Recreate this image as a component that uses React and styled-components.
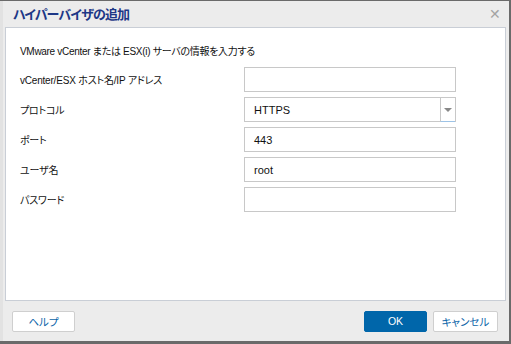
import React from 'react';
import styled, { createGlobalStyle } from 'styled-components';

const Global = createGlobalStyle`
  html, body {
    margin: 0;
    padding: 0;
    background: #6a6a6a;
  }
  body {
    font-family: "Liberation Sans", "Noto Sans CJK JP", sans-serif;
    font-feature-settings: "palt";
  }
`;

const Frame = styled.div`
  width: 511px;
  height: 344px;
  box-sizing: border-box;
  padding: 1px 2px 3px 0;
  background: #6a6a6a;
`;

const Dialog = styled.div`
  height: 100%;
  display: flex;
  flex-direction: column;
  background: #ececec;
  border-left: 3px solid #e2e2e2;
  box-sizing: border-box;
`;

const TitleBar = styled.div`
  height: 26px;
  flex: none;
  display: flex;
  align-items: center;
  justify-content: space-between;
  padding: 0 8px 1px 10px;
  box-sizing: border-box;
`;

const Title = styled.h1`
  margin: 0;
  font-size: 13px;
  font-weight: bold;
  color: #1d3786;
  font-family: "Noto Sans CJK JP", sans-serif;
  font-feature-settings: "palt";
  letter-spacing: -0.9px;
`;

const Close = styled.span`
  color: #a4a4a4;
  font-size: 14px;
  line-height: 1;
  cursor: pointer;
`;

const Panel = styled.div`
  flex: 1;
  margin: 0 3px 0 2px;
  background: #fff;
  border: 1px solid #c9ced6;
  padding: 17px 49px 0 14px;
`;

const Intro = styled.p`
  margin: 0 0 8px;
  font-size: 10px;
  line-height: 14px;
  color: #111;
  letter-spacing: -0.3px;
`;

const Form = styled.div`
  display: grid;
  grid-template-columns: 1fr 212px;
  row-gap: 5px;
  align-items: center;
`;

const Label = styled.label`
  font-size: 10px;
  color: #111;
  letter-spacing: -0.2px;
`;

const Field = styled.div`
  position: relative;
  height: 25px;
  box-sizing: border-box;
  border: 1px solid #c8c8c8;
  display: flex;
  align-items: center;
  padding: 0 9px;
  font-size: 11px;
  color: #111;
`;

const Arrow = styled.span`
  position: absolute;
  right: 0;
  top: 0;
  bottom: -1px;
  width: 14px;
  border-left: 1px solid #c8c8c8;
  border-bottom: 1px solid #9dc3e6;
  display: flex;
  align-items: center;
  justify-content: center;
  &::after {
    content: '';
    border-left: 4px solid transparent;
    border-right: 4px solid transparent;
    border-top: 4px solid #888;
  }
`;

const Footer = styled.div`
  height: 40px;
  flex: none;
  display: flex;
  align-items: center;
  padding: 0 11px 0 9px;
  gap: 6px;
`;

const Button = styled.button`
  width: ${({ w }) => w}px;
  height: 21px;
  box-sizing: border-box;
  border-radius: 2px;
  border: 1px solid ${({ primary }) => (primary ? '#0066aa' : '#cfcfcf')};
  background: ${({ primary }) => (primary ? '#0066aa' : '#fff')};
  color: ${({ primary }) => (primary ? '#fff' : '#0a64a8')};
  font-size: 10.5px;
  font-family: "Liberation Sans", "Noto Sans CJK JP", sans-serif;
  font-feature-settings: "palt";
  padding: 0;
  cursor: pointer;
  margin-left: ${({ push }) => (push ? 'auto' : '0')};
`;

const rows = [
  { label: 'vCenter/ESX ホスト名/IP アドレス', value: '' },
  { label: 'プロトコル', value: 'HTTPS', select: true },
  { label: 'ポート', value: '443' },
  { label: 'ユーザ名', value: 'root' },
  { label: 'パスワード', value: '' },
];

export default function App() {
  return (
    <Frame>
      <Global />
      <Dialog>
        <TitleBar>
          <Title>ハイパーバイザの追加</Title>
          <Close>✕</Close>
        </TitleBar>
        <Panel>
          <Intro>VMware vCenter または ESX(i) サーバの情報を入力する</Intro>
          <Form>
            {rows.map((r) => (
              <React.Fragment key={r.label}>
                <Label>{r.label}</Label>
                <Field>
                  {r.value}
                  {r.select && <Arrow />}
                </Field>
              </React.Fragment>
            ))}
          </Form>
        </Panel>
        <Footer>
          <Button w={63}>ヘルプ</Button>
          <Button w={63} primary push>OK</Button>
          <Button w={65}>キャンセル</Button>
        </Footer>
      </Dialog>
    </Frame>
  );
}
